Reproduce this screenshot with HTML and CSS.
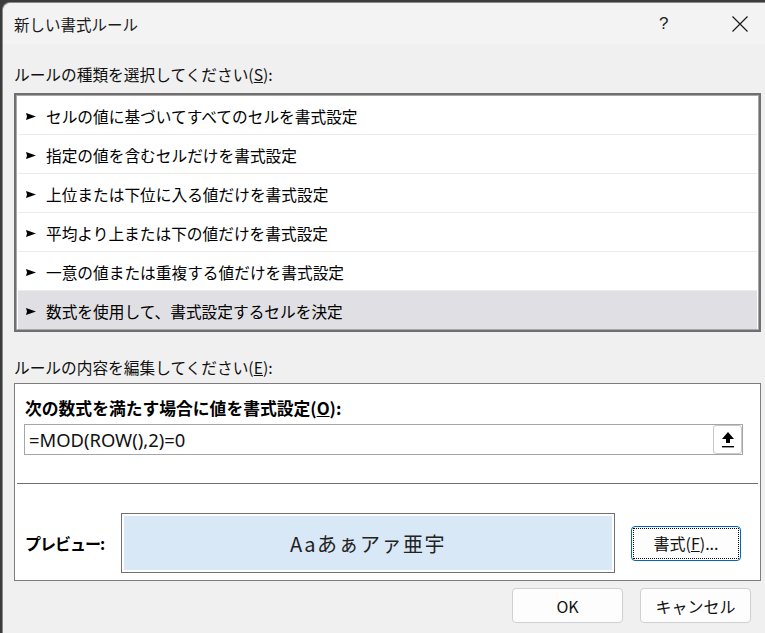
FILE: index.html
```html
<!DOCTYPE html>
<html lang="ja">
<head>
<meta charset="utf-8">
<title>新しい書式ルール</title>
<link rel="stylesheet" href="styles.css">
</head>
<body>
<div class="dialog">
  <div class="titlebar">
    <span class="title">新しい書式ルール</span>
    <span class="help">?</span>
    <span class="close"><svg width="16" height="16" viewBox="0 0 16 16"><path d="M0.5 0.5 L15.5 15.5 M15.5 0.5 L0.5 15.5" stroke="#1a1a1a" stroke-width="1.2" fill="none"/></svg></span>
  </div>
  <div class="content">
    <div class="label">ルールの種類を選択してください(<u>S</u>):</div>
    <ul class="rulelist">
      <li class="rule"><svg class="pointer" width="10" height="7" viewBox="0 0 10 7"><polygon points="0,0 10,3.5 0,7 1,3.5"/></svg><span>セルの値に基づいてすべてのセルを書式設定</span></li>
      <li class="rule"><svg class="pointer" width="10" height="7" viewBox="0 0 10 7"><polygon points="0,0 10,3.5 0,7 1,3.5"/></svg><span>指定の値を含むセルだけを書式設定</span></li>
      <li class="rule"><svg class="pointer" width="10" height="7" viewBox="0 0 10 7"><polygon points="0,0 10,3.5 0,7 1,3.5"/></svg><span>上位または下位に入る値だけを書式設定</span></li>
      <li class="rule"><svg class="pointer" width="10" height="7" viewBox="0 0 10 7"><polygon points="0,0 10,3.5 0,7 1,3.5"/></svg><span>平均より上または下の値だけを書式設定</span></li>
      <li class="rule"><svg class="pointer" width="10" height="7" viewBox="0 0 10 7"><polygon points="0,0 10,3.5 0,7 1,3.5"/></svg><span>一意の値または重複する値だけを書式設定</span></li>
      <li class="rule selected"><svg class="pointer" width="10" height="7" viewBox="0 0 10 7"><polygon points="0,0 10,3.5 0,7 1,3.5"/></svg><span>数式を使用して、書式設定するセルを決定</span></li>
    </ul>
    <div class="label label2">ルールの内容を編集してください(<u>E</u>):</div>
    <div class="editbox">
      <div class="boldlabel">次の数式を満たす場合に値を書式設定(<u>O</u>):</div>
      <div class="formula">
        <span class="formula-text">=MOD(ROW(),2)=0</span>
        <span class="refbtn"><svg width="14" height="18" viewBox="0 0 14 18"><path d="M7 1 L13 8 L9 8 L9 12 L5 12 L5 8 L1 8 Z" fill="#000"/><rect x="1" y="15" width="12" height="1.4" fill="#000"/></svg></span>
      </div>
      <div class="sep"></div>
      <div class="previewrow">
        <span class="boldlabel prevlabel">プレビュー:</span>
        <div class="preview"><div class="sample">Aaあぁアァ亜宇</div></div>
        <span class="btn fmtbtn"><span class="focusring">書式(<u>F</u>)...</span></span>
      </div>
    </div>
    <div class="actions">
      <span class="btn">OK</span>
      <span class="btn">キャンセル</span>
    </div>
  </div>
</div>
</body>
</html>
```
FILE: styles.css
```css
html, body {
  margin: 0;
  padding: 0;
  height: 100%;
  overflow: hidden;
}
body {
  background: #3c3c3c;
  font-family: "Noto Sans CJK JP", "Noto Sans", sans-serif;
  color: #000;
}
.dialog {
  margin: 3px 0 0 3px;
  width: 775px;
  height: 650px;
  background: #f0f0f0;
  border-top-left-radius: 8px;
  overflow: hidden;
  box-shadow: -1px -1px 0 #8a8a8a;
}
.titlebar {
  height: 41px;
  background: #f3f3f3;
  display: flex;
  align-items: center;
  padding-left: 11px;
}
.title {
  font-size: 15.5px;
  color: #1b1b1b;
  flex: 1;
}
.help {
  font-family: "Liberation Sans", sans-serif;
  font-size: 17px;
  color: #222;
  width: 14px;
  margin-right: 59px;
}
.close {
  width: 16px;
  margin-right: 30px;
  display: flex;
}
.content {
  width: 747px;
  padding: 20px 0 0 11px;
}
.label {
  font-size: 15.7px;
  line-height: 22px;
  height: 22px;
  color: #111;
}
.rulelist {
  list-style: none;
  margin: 7px 0 0 0;
  padding: 1px 2px;
  border: 2px solid #6f6f6f;
  background: #fff;
  box-shadow: inset 0 0 0 1px #a8a8a8;
}
.rule {
  border-bottom: 1px solid #ebebeb;
  display: flex;
  align-items: center;
  font-size: 15.7px;
  padding-left: 8px;
  padding-top: 3px;
  box-sizing: content-box;
  height: 35px;
}
.rule.selected {
  border-bottom: none;
  height: 36px;
  padding-top: 2px;
  background: #e0dfe3;
}
.pointer {
  margin-right: 10px;
  fill: #000;
}
.label2 {
  margin-top: 25px;
}
.editbox {
  margin-top: 4px;
  background: #fff;
  border: 1px solid #7d7d7d;
  padding: 13px 0 7px 0;
}
.boldlabel {
  font-weight: bold;
  font-size: 16.8px;
  line-height: 22px;
  padding-left: 10px;
}
.formula {
  margin: 5px 0 0 9px;
  width: 717px;
  height: 29px;
  border: 1px solid #a6a6a6;
  display: flex;
  align-items: center;
  justify-content: space-between;
}
.formula-text {
  font-family: "Noto Sans", sans-serif;
  font-size: 18.4px;
  padding-left: 4px;
  color: #111;
}
.refbtn {
  width: 27px;
  height: 27px;
  border: 1px solid #c8c8c8;
  border-radius: 3px;
  display: flex;
  align-items: center;
  justify-content: center;
  background: #fff;
}
.sep {
  margin: 28px 2px 0 2px;
  height: 1px;
  background: #707070;
}
.previewrow {
  margin-top: 29px;
  display: flex;
  align-items: center;
}
.prevlabel {
  width: 96px;
  font-size: 16px;
  letter-spacing: -1px;
}
.preview {
  width: 488px;
  height: 54px;
  border: 1px solid #707070;
  padding: 2px;
  background: #fff;
}
.sample {
  height: 100%;
  background: #d9e8f6;
  display: flex;
  align-items: center;
  justify-content: center;
  font-size: 20px;
  letter-spacing: 1.5px;
  color: #222;
}
.btn {
  box-sizing: border-box;
  width: 111px;
  height: 35px;
  border: 1px solid #d0d0d0;
  border-radius: 4px;
  background: #fdfdfd;
  display: flex;
  align-items: center;
  justify-content: center;
  font-size: 16px;
  color: #111;
}
.fmtbtn {
  margin-left: 16px;
  width: 110px;
  border: 1px solid #0067c0;
  padding: 1px;
}
.focusring {
  width: 100%;
  height: 100%;
  box-sizing: border-box;
  border: 1px dotted #000;
  display: flex;
  align-items: center;
  justify-content: center;
}
.actions {
  display: flex;
  justify-content: flex-end;
  gap: 17px;
  margin-top: 7px;
  padding-right: 10px;
}
```
